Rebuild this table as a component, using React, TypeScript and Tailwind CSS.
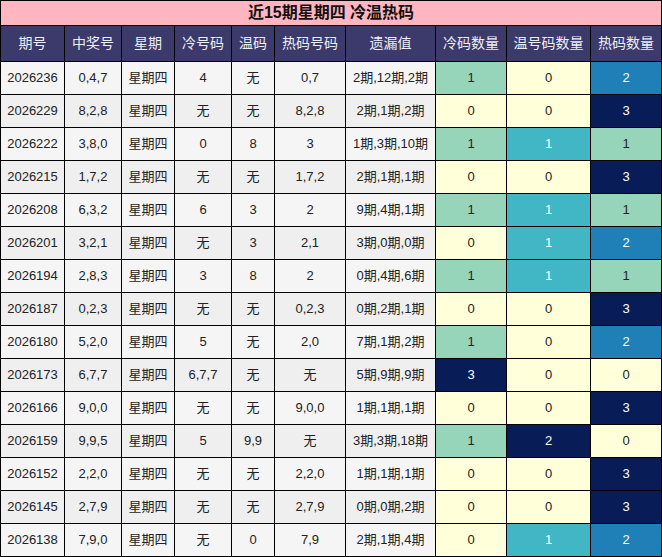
import React from "react";

type Row = {
  issue: string;
  win: string;
  cold: string;
  warm: string;
  hot: string;
  miss: string;
  c: number;
  w: number;
  h: number;
};

const rows: Row[] = [
  { issue: "2026236", win: "0,4,7", cold: "4", warm: "无", hot: "0,7", miss: "2期,12期,2期", c: 1, w: 0, h: 2 },
  { issue: "2026229", win: "8,2,8", cold: "无", warm: "无", hot: "8,2,8", miss: "2期,1期,2期", c: 0, w: 0, h: 3 },
  { issue: "2026222", win: "3,8,0", cold: "0", warm: "8", hot: "3", miss: "1期,3期,10期", c: 1, w: 1, h: 1 },
  { issue: "2026215", win: "1,7,2", cold: "无", warm: "无", hot: "1,7,2", miss: "2期,1期,1期", c: 0, w: 0, h: 3 },
  { issue: "2026208", win: "6,3,2", cold: "6", warm: "3", hot: "2", miss: "9期,4期,1期", c: 1, w: 1, h: 1 },
  { issue: "2026201", win: "3,2,1", cold: "无", warm: "3", hot: "2,1", miss: "3期,0期,0期", c: 0, w: 1, h: 2 },
  { issue: "2026194", win: "2,8,3", cold: "3", warm: "8", hot: "2", miss: "0期,4期,6期", c: 1, w: 1, h: 1 },
  { issue: "2026187", win: "0,2,3", cold: "无", warm: "无", hot: "0,2,3", miss: "0期,2期,1期", c: 0, w: 0, h: 3 },
  { issue: "2026180", win: "5,2,0", cold: "5", warm: "无", hot: "2,0", miss: "7期,1期,2期", c: 1, w: 0, h: 2 },
  { issue: "2026173", win: "6,7,7", cold: "6,7,7", warm: "无", hot: "无", miss: "5期,9期,9期", c: 3, w: 0, h: 0 },
  { issue: "2026166", win: "9,0,0", cold: "无", warm: "无", hot: "9,0,0", miss: "1期,1期,1期", c: 0, w: 0, h: 3 },
  { issue: "2026159", win: "9,9,5", cold: "5", warm: "9,9", hot: "无", miss: "3期,3期,18期", c: 1, w: 2, h: 0 },
  { issue: "2026152", win: "2,2,0", cold: "无", warm: "无", hot: "2,2,0", miss: "1期,1期,1期", c: 0, w: 0, h: 3 },
  { issue: "2026145", win: "2,7,9", cold: "无", warm: "无", hot: "2,7,9", miss: "0期,0期,2期", c: 0, w: 0, h: 3 },
  { issue: "2026138", win: "7,9,0", cold: "无", warm: "0", hot: "7,9", miss: "2期,1期,4期", c: 0, w: 1, h: 2 },
];

// heat colours per column, keyed by value
const coldTone: Record<number, string> = {
  0: "bg-[#ffffd9] text-[#222]",
  1: "bg-[#97d5ba] text-[#222]",
  3: "bg-[#081d58] text-white",
};
const warmTone: Record<number, string> = {
  0: "bg-[#ffffd9] text-[#222]",
  1: "bg-[#41b6c4] text-white",
  2: "bg-[#081d58] text-white",
};
const hotTone: Record<number, string> = {
  0: "bg-[#ffffd9] text-[#222]",
  1: "bg-[#97d5ba] text-[#222]",
  2: "bg-[#1f80b8] text-white",
  3: "bg-[#081d58] text-white",
};

const headers = ["期号", "中奖号", "星期", "冷号码", "温码", "热码号码", "遗漏值", "冷码数量", "温号码数量", "热码数量"];

const App = () => {
  return (
    <div
      className="w-[662px] h-[557px] bg-black p-px grid gap-px grid-cols-[63px_56px_52px_56px_42px_70px_89px_70px_83px_70px] grid-rows-[24px_35px_repeat(15,32px)]"
      style={{ fontFamily: '"Liberation Sans", "Noto Sans CJK SC", sans-serif' }}
    >
      {/* Title */}
      <div className="col-span-10 bg-[#ffb6c1] flex items-center justify-center text-[16px] font-bold text-[#111]">
        近15期星期四 冷温热码
      </div>

      {/* Header */}
      {headers.map((h) => (
        <div key={h} className="bg-[#3c3a6b] text-[#eeeef5] text-[14px] flex items-center justify-center">
          {h}
        </div>
      ))}

      {/* Rows */}
      {rows.map((r, i) => {
        const base = i % 2 === 0 ? "bg-[#f5f5f5]" : "bg-[#efefef]";
        const cell = `${base} text-[#222] text-[13px] flex items-center justify-center`;
        return (
          <React.Fragment key={r.issue}>
            <div className={cell}>{r.issue}</div>
            <div className={cell}>{r.win}</div>
            <div className={cell}>星期四</div>
            <div className={cell}>{r.cold}</div>
            <div className={cell}>{r.warm}</div>
            <div className={cell}>{r.hot}</div>
            <div className={cell}>{r.miss}</div>
            <div className={`${coldTone[r.c]} text-[13px] flex items-center justify-center`}>{r.c}</div>
            <div className={`${warmTone[r.w]} text-[13px] flex items-center justify-center`}>{r.w}</div>
            <div className={`${hotTone[r.h]} text-[13px] flex items-center justify-center`}>{r.h}</div>
          </React.Fragment>
        );
      })}
    </div>
  );
};

export default App;
